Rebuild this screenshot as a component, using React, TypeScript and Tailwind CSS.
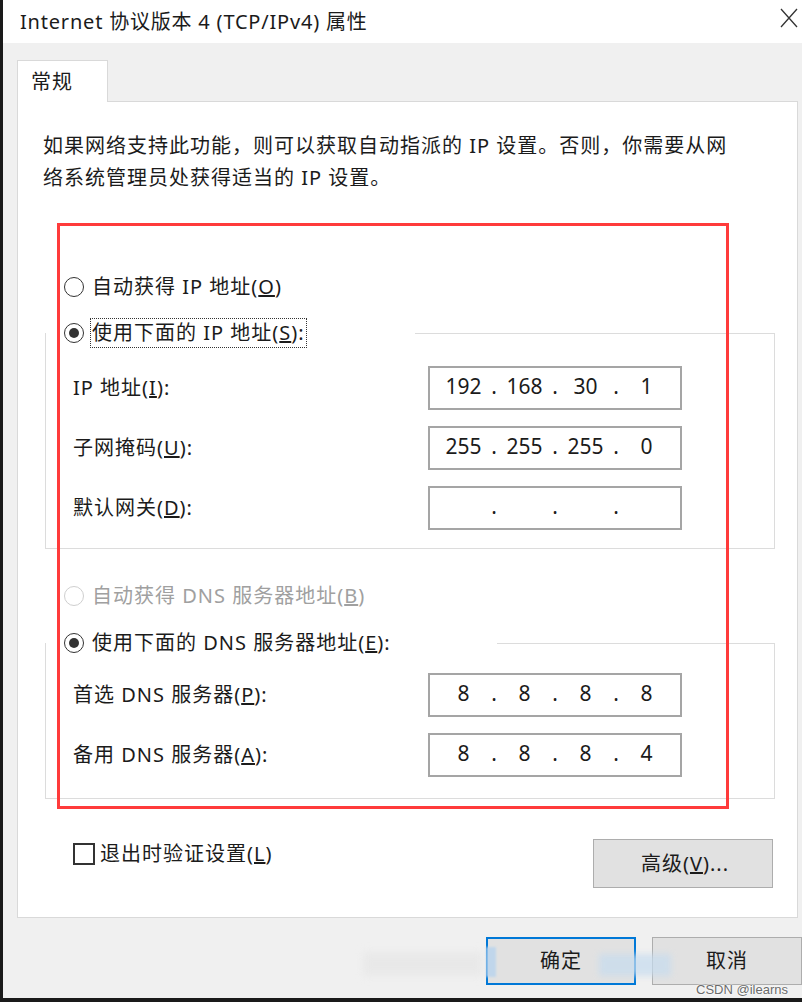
import React from "react";

const font = "font-['Noto_Sans','Noto_Sans_CJK_SC',sans-serif]";

function Radio({ checked, disabled }: { checked?: boolean; disabled?: boolean }) {
  return (
    <span
      className={
        disabled
          ? "flex h-[20px] w-[20px] shrink-0 items-center justify-center rounded-full border border-[#cfcfcf] bg-white"
          : "flex h-[20px] w-[20px] shrink-0 items-center justify-center rounded-full border border-[#333333] bg-white"
      }
    >
      {checked && <span className="h-[10px] w-[10px] rounded-full bg-[#333333]" />}
    </span>
  );
}

function IpField({ parts }: { parts: string[] }) {
  return (
    <div className="flex h-[44px] w-[254px] items-center border-2 border-[#a5a5a5] bg-white pb-[3px] pl-[7px] text-[21px] leading-none tracking-normal text-[#1b1b1b]">
      {parts.map((p, i) => (
        <React.Fragment key={i}>
          {i > 0 && <span className="w-[8px] text-center">.</span>}
          <span className="w-[53px] text-center">{p}</span>
        </React.Fragment>
      ))}
    </div>
  );
}

function FieldRow({ label, hot, rest, parts }: { label: string; hot: string; rest: string; parts: string[] }) {
  return (
    <div className="flex items-center pl-[27px]">
      <span className="w-[355px] whitespace-nowrap">
        {label}(<u>{hot}</u>){rest}
      </span>
      <IpField parts={parts} />
    </div>
  );
}

export default function App() {
  return (
    <div
      className={`relative flex h-[1002px] w-[802px] flex-col overflow-hidden border-b-[4px] border-l-[3px] border-[#1a1a1a] bg-[#f0f0f0] text-[20px] tracking-[1px] text-[#1b1b1b] ${font}`}
    >
      {/* title bar */}
      <div className="flex h-[43px] shrink-0 items-center justify-between bg-white pl-[17px] pr-[4px]">
        <span className="whitespace-nowrap text-[20px] leading-none tracking-[0.8px]">Internet 协议版本 4 (TCP/IPv4) 属性</span>
        <svg width="18" height="20" viewBox="0 0 18 20" className="-mt-[8px]">
          <path d="M1 1 L17 19 M17 1 L1 19" stroke="#333" strokeWidth="1.3" fill="none" />
        </svg>
      </div>

      {/* tab + panel */}
      <div className="ml-[14px] flex w-[781px] flex-col pt-[17px]">
        <div className="relative z-10 -mb-px flex h-[42px] w-[91px] items-center border border-b-0 border-[#d9d9d9] bg-white pl-[13px]">
          常规
        </div>
        <div className="border border-[#d9d9d9] bg-white pb-[29px] pl-[27px] pt-[28px]">
          <p className="-ml-[2px] whitespace-nowrap leading-[32px]">
            如果网络支持此功能，则可以获取自动指派的 IP 设置。否则，你需要从网
            <br />
            络系统管理员处获得适当的 IP 设置。
          </p>

          <div className="mt-[78px] flex h-[30px] items-center gap-[8px] pl-[19px]">
            <Radio />
            <span className="whitespace-nowrap">
              自动获得 IP 地址(<u>O</u>)
            </span>
          </div>

          <fieldset className="mt-[16px] w-[730px] border border-[#dcdcdc] pb-[18px]">
            <legend className="h-[30px] w-[369px]">
              <div className="flex h-[30px] items-center gap-[6px] pl-[18px]">
                <Radio checked />
                <span className="flex h-[30px] items-center whitespace-nowrap border border-dotted border-[#333333] px-[1px]">
                  使用下面的 IP 地址(<u>S</u>):
                </span>
              </div>
            </legend>
            <div className="flex flex-col gap-[16px] pt-[18px]">
              <FieldRow label="IP 地址" hot="I" rest=":" parts={["192", "168", "30", "1"]} />
              <FieldRow label="子网掩码" hot="U" rest=":" parts={["255", "255", "255", "0"]} />
              <FieldRow label="默认网关" hot="D" rest=":" parts={["", "", "", ""]} />
            </div>
          </fieldset>

          <div className="mt-[32px] flex h-[30px] items-center gap-[8px] pl-[19px] text-[#a0a0a0]">
            <Radio disabled />
            <span className="whitespace-nowrap">
              自动获得 DNS 服务器地址(<u>B</u>)
            </span>
          </div>

          <fieldset className="mt-[17px] w-[730px] border border-[#dcdcdc] pb-[21px]">
            <legend className="h-[30px] w-[451px]">
              <div className="flex h-[30px] items-center gap-[8px] pl-[18px]">
                <Radio checked />
                <span className="whitespace-nowrap">
                  使用下面的 DNS 服务器地址(<u>E</u>):
                </span>
              </div>
            </legend>
            <div className="flex flex-col gap-[16px] pt-[15px]">
              <FieldRow label="首选 DNS 服务器" hot="P" rest=":" parts={["8", "8", "8", "8"]} />
              <FieldRow label="备用 DNS 服务器" hot="A" rest=":" parts={["8", "8", "8", "4"]} />
            </div>
          </fieldset>

          <div className="mt-[40px] flex w-[730px] items-start justify-between pr-[2px]">
            <div className="mt-[4px] flex items-center gap-[5px] pl-[28px]">
              <span className="h-[22px] w-[22px] border-2 border-[#333333] bg-white" />
              <span className="whitespace-nowrap leading-[22px]">
                退出时验证设置(<u>L</u>)
              </span>
            </div>
            <button className="flex h-[49px] w-[180px] items-center justify-center border border-[#adadad] bg-[#e1e1e1] pl-[4px]">
              高级(<u>V</u>)...
            </button>
          </div>
        </div>
      </div>

      {/* bottom buttons */}
      <div className="flex justify-end gap-[16px] pt-[19px]">
        <button className="flex h-[48px] w-[150px] items-center justify-center border-2 border-[#0078d7] bg-[#e1e1e1]">
          确定
        </button>
        <button className="flex h-[48px] w-[150px] items-center justify-center border border-[#adadad] bg-[#e1e1e1]">
          取消
        </button>
      </div>

      {/* annotation overlay */}
      <div className="pointer-events-none absolute left-[54px] top-[223px] h-[586px] w-[672px] border-[3px] border-[#ff3b3b]" />

      {/* blurred watermark smudges */}
      <div className="pointer-events-none absolute left-[360px] top-[952px] h-[24px] w-[120px] bg-[#e6e6e6] opacity-70 blur-[4px]" />
      <div className="pointer-events-none absolute left-[483px] top-[947px] h-[30px] w-[10px] bg-[#b8d4ee] opacity-80 blur-[1px]" />
      <div className="pointer-events-none absolute left-[596px] top-[954px] h-[22px] w-[72px] bg-[#c6dcef] opacity-70 blur-[3px]" />
      <div className="pointer-events-none absolute bottom-[2px] right-[14px] whitespace-nowrap font-['Liberation_Sans',sans-serif] text-[13px] leading-none tracking-normal text-[#6a6a6a] [text-shadow:0_0_2px_#fff,0_0_2px_#fff]">
        CSDN @ilearns
      </div>
    </div>
  );
}
